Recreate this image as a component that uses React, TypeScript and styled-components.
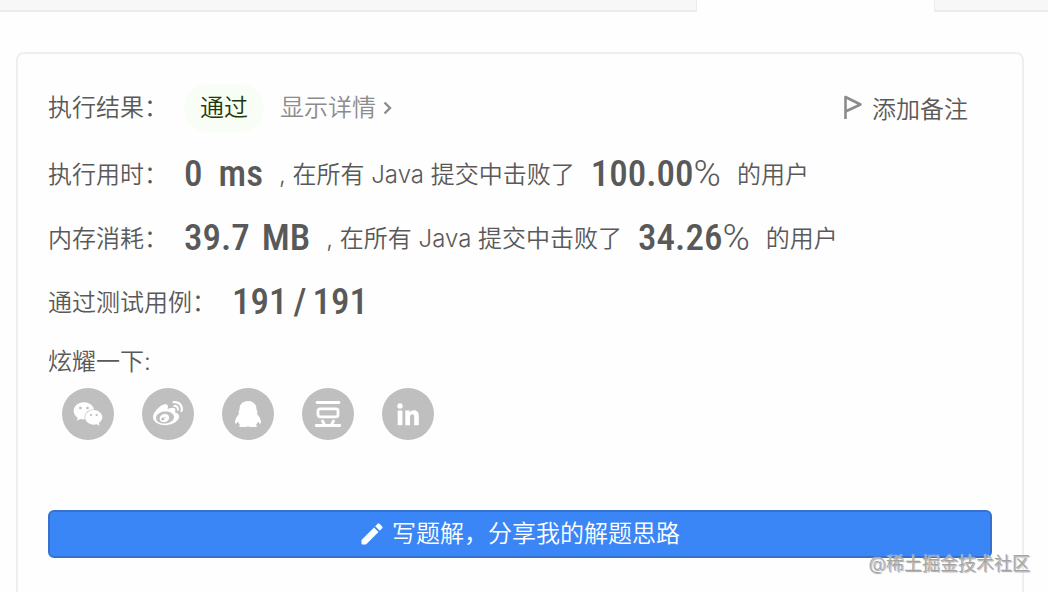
import React from "react";
import styled, { createGlobalStyle } from "styled-components";
import { FaWeibo, FaWeixin } from "react-icons/fa";

const GlobalStyle = createGlobalStyle`
  * { box-sizing: border-box; }
  body {
    margin: 0;
    background: #fefefe;
    color: #595959;
    font-family: Inter, "Noto Sans CJK SC", sans-serif;
    font-size: 24px;
    font-weight: 350;
    line-height: 32px;
  }
  button { font: inherit; color: inherit; background: none; border: 0; padding: 0; cursor: pointer; }
`;

const Page = styled.div`
  position: relative;
  display: flex;
  flex-direction: column;
  min-height: 100vh;
`;

const TabStrip = styled.div`
  display: flex;
  height: 12px;
`;

const TabEdge = styled.div<{ $grow: number; $active?: boolean }>`
  flex: ${(p) => p.$grow} 1 0;
  background: ${(p) => (p.$active ? "#fefefe" : "#f7f7f7")};
  border: solid #ebebeb;
  border-width: ${(p) => (p.$active ? "0 1px" : "0 0 2px")};
`;

const Card = styled.main`
  flex: 1;
  margin: 40px 24px 0 16px;
  padding: 22px 30px 32px;
  border: 2px solid #efefef;
  border-bottom: 0;
  border-radius: 8px 8px 0 0;
`;

const ResultRow = styled.div`
  display: flex;
  align-items: center;
  height: 64px;
  padding-right: 24px;
`;

const Label = styled.span`
  width: 136px;
`;

const Badge = styled.span`
  padding: 8px 16px;
  border-radius: 24px;
  background: #f8fdf6;
  color: #1c3a0c;
`;

const DetailButton = styled.button`
  display: flex;
  align-items: center;
  gap: 6px;
  margin-left: 16px;
  color: #8c8c8c;
`;

const NoteButton = styled.button`
  display: flex;
  align-items: flex-start;
  gap: 8px;
  margin-left: auto;
  padding-top: 4px;
`;

const StatRow = styled.div`
  display: flex;
  align-items: flex-start;
  height: 64px;
  line-height: 70px;
  white-space: pre;
`;

const Figure = styled.span<{ $gap?: number }>`
  display: flex;
  align-items: baseline;
  gap: ${(p) => p.$gap ?? 0}px;
  margin-right: 16px;
  font-family: "Roboto Condensed", Roboto, sans-serif;
  font-size: 37px;
  font-weight: 500;
  line-height: 68px;
`;

const Thin = styled.span`
  font-family: Roboto, sans-serif;
  font-weight: 300;
`;

const Phrase = styled.span`
  margin-right: 16px;
`;

const ShareTitle = styled.div`
  height: 56px;
  line-height: 60px;
`;

const ShareList = styled.div`
  display: flex;
  gap: 28px;
  padding-left: 14px;
`;

const ShareButton = styled.button`
  display: flex;
  align-items: center;
  justify-content: center;
  width: 52px;
  height: 52px;
  border-radius: 50%;
  background: #bfbfbf;
  color: #fff;
`;

const WriteButton = styled.button`
  display: flex;
  align-items: center;
  justify-content: center;
  gap: 8px;
  width: 100%;
  height: 48px;
  margin-top: 70px;
  border: 2px solid #3571cd;
  border-radius: 6px;
  background: #3b86f7;
  color: #fff;
`;

const Watermark = styled.span`
  position: absolute;
  right: 18px;
  bottom: 12px;
  color: #a3a3a3;
  font-size: 18px;
  text-shadow: 0 0 1px #fff, 1px 1px 1px #999;
`;

const Flag = () => (
  <svg width="20" height="26" viewBox="0 0 20 26" fill="none" stroke="#8c8c8c" strokeWidth="2.600" strokeLinejoin="round">
    <path d="M1.500 25V3L16.500 10.500L1.500 17.500" />
  </svg>
);

const Chevron = () => (
  <svg width="10" height="14" viewBox="0 0 10 14" fill="none" stroke="#8c8c8c" strokeWidth="2.400">
    <path d="M2.500 1.500L8 7L2.500 12.500" />
  </svg>
);

const Pencil = () => (
  <svg width="24" height="24" viewBox="0 0 24 24" fill="#fff">
    <path d="M1.500 18L14 5.500L18.500 10L6 22.500H2.500Q1.500 22.500 1.500 21.500Z" />
    <path d="M15.200 4.300L17.700 1.800Q18.600 .9 19.500 1.800L22.200 4.500Q23.100 5.400 22.200 6.300L19.700 8.800Z" />
  </svg>
);

const Qq = () => (
  <svg width="28" height="28" viewBox="0 0 28 28" fill="#fff">
    <path d="M14 1C8.500 1 5.500 4.500 5.500 9.500C5.300 10.500 4.600 11.200 4.600 12.400C4.700 13.200 5 13.500 4.700 14.200C2.500 17 1 19.500 1 22C1 23.500 1.600 24.200 2.400 23.400L4 21.500C4.500 23 5.200 24 6.200 24.800C4.800 25.300 4.600 27 6.500 27H12L14 26.300L16 27H21.500C23.400 27 23.200 25.300 21.800 24.800C22.800 24 23.500 23 24 21.500L25.600 23.400C26.400 24.200 27 23.500 27 22C27 19.500 25.500 17 23.300 14.200C23 13.500 23.300 13.200 23.400 12.400C23.400 11.200 22.700 10.500 22.500 9.500C22.500 4.500 19.500 1 14 1Z" />
  </svg>
);

const Douban = () => (
  <svg width="28" height="28" viewBox="0 0 28 28" fill="none" stroke="#fff" strokeWidth="2.800" strokeLinecap="round" strokeLinejoin="round">
    <path d="M3 2.500H25M2.200 25.500H25.800M8.500 21L10.500 25M19.500 21L17.500 25" />
    <rect x="4" y="8.800" width="20" height="8" rx="2" />
  </svg>
);

const Linkedin = () => (
  <svg width="24" height="24" viewBox="0 0 24 24" fill="#fff">
    <circle cx="4" cy="4" r="2.700" />
    <path d="M1.700 8.500H6.400V23.300H1.700ZM9.300 8.500H13.700V10.500C14.600 9 16 8.200 17.900 8.200C21.400 8.200 22.800 10.500 22.800 14.300V23.300H18.200V15.200C18.200 13.200 17.600 12.200 16.200 12.200C14.700 12.200 14 13.300 14 15.200V23.300H9.300Z" />
  </svg>
);

const shares = [
  { name: "微信", icon: <FaWeixin size={30} /> },
  { name: "微博", icon: <FaWeibo size={30} /> },
  { name: "QQ", icon: <Qq /> },
  { name: "豆瓣", icon: <Douban /> },
  { name: "LinkedIn", icon: <Linkedin /> },
];

const stats = [
  { label: "执行用时：", value: "0", unit: "ms", gap: 16, beat: "100.00" },
  { label: "内存消耗：", value: "39.7", unit: "MB", gap: 12, beat: "34.26" },
];

export default function App() {
  return (
    <>
      <GlobalStyle />
      <Page>
        <TabStrip>
          <TabEdge $grow={697} />
          <TabEdge $grow={237} $active />
          <TabEdge $grow={113} />
        </TabStrip>
        <Card>
          <ResultRow>
            <Label>执行结果：</Label>
            <Badge>通过</Badge>
            <DetailButton>
              显示详情
              <Chevron />
            </DetailButton>
            <NoteButton>
              <Flag />
              添加备注
            </NoteButton>
          </ResultRow>
          {stats.map((s) => (
            <StatRow key={s.label}>
              <Label>{s.label}</Label>
              <Figure $gap={s.gap}>
                <span>{s.value}</span>
                <span>{s.unit}</span>
              </Figure>
              <Phrase>, 在所有 Java 提交中击败了</Phrase>
              <Figure>
                {s.beat}
                <Thin>%</Thin>
              </Figure>
              <span>的用户</span>
            </StatRow>
          ))}
          <StatRow>
            <Phrase>通过测试用例：</Phrase>
            <Figure $gap={6}>
              <span>191</span>
              <span>/</span>
              <span>191</span>
            </Figure>
          </StatRow>
          <ShareTitle>炫耀一下:</ShareTitle>
          <ShareList>
            {shares.map((s) => (
              <ShareButton key={s.name} aria-label={s.name}>
                {s.icon}
              </ShareButton>
            ))}
          </ShareList>
          <WriteButton>
            <Pencil />
            写题解，分享我的解题思路
          </WriteButton>
        </Card>
        <Watermark>@稀土掘金技术社区</Watermark>
      </Page>
    </>
  );
}
